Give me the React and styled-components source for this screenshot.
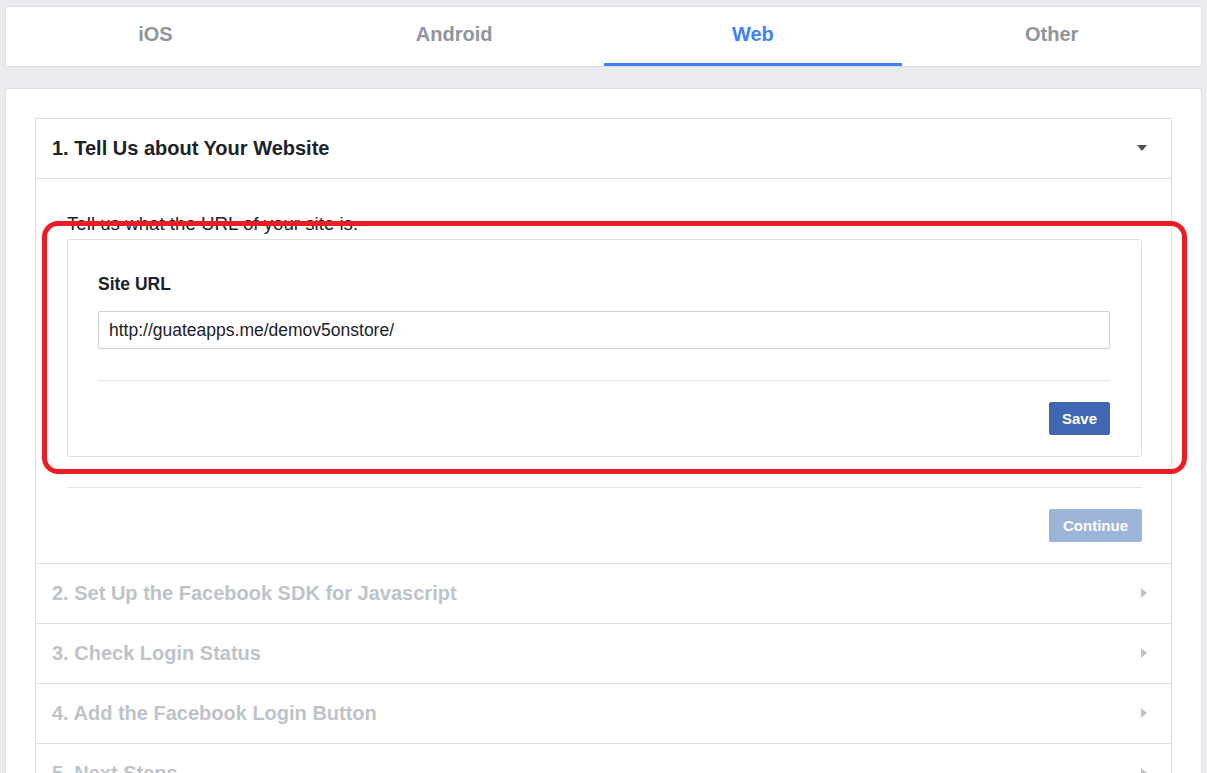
import React from 'react';
import styled, { createGlobalStyle } from 'styled-components';

const GlobalStyle = createGlobalStyle`
    html, body {
        margin: 0;
        padding: 0;
        background: #e9ebee;
        font-family: "Liberation Sans", Arial, Helvetica, sans-serif;
        color: #1d2129;
    }
    * { box-sizing: border-box; }
`

const Page = styled.div`
    padding: 6px 5px 0;
    height: 773px;
    overflow: hidden;
`

const TabBar = styled.div`
    display: grid;
    grid-template-columns: repeat(4, 1fr);
    height: 61px;
    background: #fff;
    border: 1px solid #dddfe2;
    border-radius: 3px;
`

const Tab = styled.div`
    display: flex;
    align-items: center;
    justify-content: center;
    font-size: 20px;
    font-weight: bold;
    color: ${p => (p.$active ? '#4080ff' : '#90949c')};
    border-bottom: 3px solid ${p => (p.$active ? '#4080ff' : 'transparent')};
    padding-bottom: 1px;
`

const Panel = styled.div`
    margin-top: 21px;
    background: #fff;
    border: 1px solid #dddfe2;
    border-bottom: none;
    border-radius: 3px 3px 0 0;
    padding: 29px 29px 0;
    min-height: 700px;
`

const Card = styled.div`
    border: 1px solid #dddfe2;
    border-bottom: none;
`

const StepHeader = styled.div`
    display: flex;
    align-items: center;
    justify-content: space-between;
    height: ${p => (p.$first ? 59 : 60)}px;
    padding: 0 24px 1px 16px;
    border-top: ${p => (p.$first ? 'none' : '1px solid #dddfe2')};
    font-size: 20px;
    font-weight: bold;
    color: ${p => (p.$muted ? '#bec3c9' : '#1d2129')};
`

const StepBody = styled.div`
    position: relative;
    border-top: 1px solid #dddfe2;
    padding: 35px 29px 0 31px;
`

const Intro = styled.div`
    font-size: 18.7px;
    line-height: 20px;
    margin-bottom: 5px;
`

const InnerBox = styled.div`
    border: 1px solid #dddfe2;
    border-radius: 3px;
    padding: 34px 31px 21px 30px;
`

const Label = styled.div`
    font-size: 17.5px;
    font-weight: bold;
    line-height: 20px;
    margin-bottom: 17px;
`

const Input = styled.input`
    display: block;
    width: 100%;
    height: 38px;
    border: 1px solid #ccd0d5;
    border-radius: 2px;
    padding: 0 10px;
    font-family: inherit;
    font-size: 17.5px;
    color: #1d2129;
    outline: none;
`

const Divider = styled.div`
    height: 1px;
    background: #e5e5e5;
    margin: ${p => p.$margin};
`

const Actions = styled.div`
    display: flex;
    justify-content: flex-end;
    padding: ${p => p.$padding};
`

const Button = styled.button`
    height: 33px;
    padding: 0 ${p => p.$px}px;
    border: 1px solid ${p => (p.$disabled ? '#9cb4d8' : '#4267b2')};
    border-radius: 2px;
    background: ${p => (p.$disabled ? '#9cb4d8' : '#4267b2')};
    color: #fff;
    font-family: inherit;
    font-size: 15px;
    font-weight: bold;
`

// red highlight drawn over the site url box
const Annotation = styled.div`
    position: absolute;
    left: 6px;
    top: 42px;
    width: 1145px;
    height: 253px;
    border: 5px solid #ed1c24;
    border-radius: 16px;
    pointer-events: none;
`

const CaretDown = () => (
    <svg width="10" height="6" viewBox="0 0 10 6">
        <path d="M0 0h10L5 6z" fill="#4b4f56" />
    </svg>
)

const CaretRight = () => (
    <svg width="6" height="10" viewBox="0 0 6 10">
        <path d="M0 0l6 5-6 5z" fill="#bec3c9" />
    </svg>
)

const tabs = ['iOS', 'Android', 'Web', 'Other']
const steps = [
    '2. Set Up the Facebook SDK for Javascript',
    '3. Check Login Status',
    '4. Add the Facebook Login Button',
    '5. Next Steps',
]

export default function App() {
    return (
        <>
            <GlobalStyle />
            <Page>
                <TabBar>
                    {tabs.map(t => (
                        <Tab key={t} $active={t === 'Web'}>{t}</Tab>
                    ))}
                </TabBar>
                <Panel>
                    <Card>
                        <StepHeader $first>
                            <span>1. Tell Us about Your Website</span>
                            <CaretDown />
                        </StepHeader>
                        <StepBody>
                            <Intro>Tell us what the URL of your site is.</Intro>
                            <InnerBox>
                                <Label>Site URL</Label>
                                <Input defaultValue="http://guateapps.me/demov5onstore/" />
                                <Divider $margin="31px 0 21px" />
                                <Actions $padding="0">
                                    <Button $px={12}>Save</Button>
                                </Actions>
                            </InnerBox>
                            <Divider $margin="30px 0 0" />
                            <Actions $padding="21px 0 21px">
                                <Button $px={13} $disabled>Continue</Button>
                            </Actions>
                            <Annotation />
                        </StepBody>
                        {steps.map(s => (
                            <StepHeader key={s} $muted>
                                <span>{s}</span>
                                <CaretRight />
                            </StepHeader>
                        ))}
                    </Card>
                </Panel>
            </Page>
        </>
    )
}
